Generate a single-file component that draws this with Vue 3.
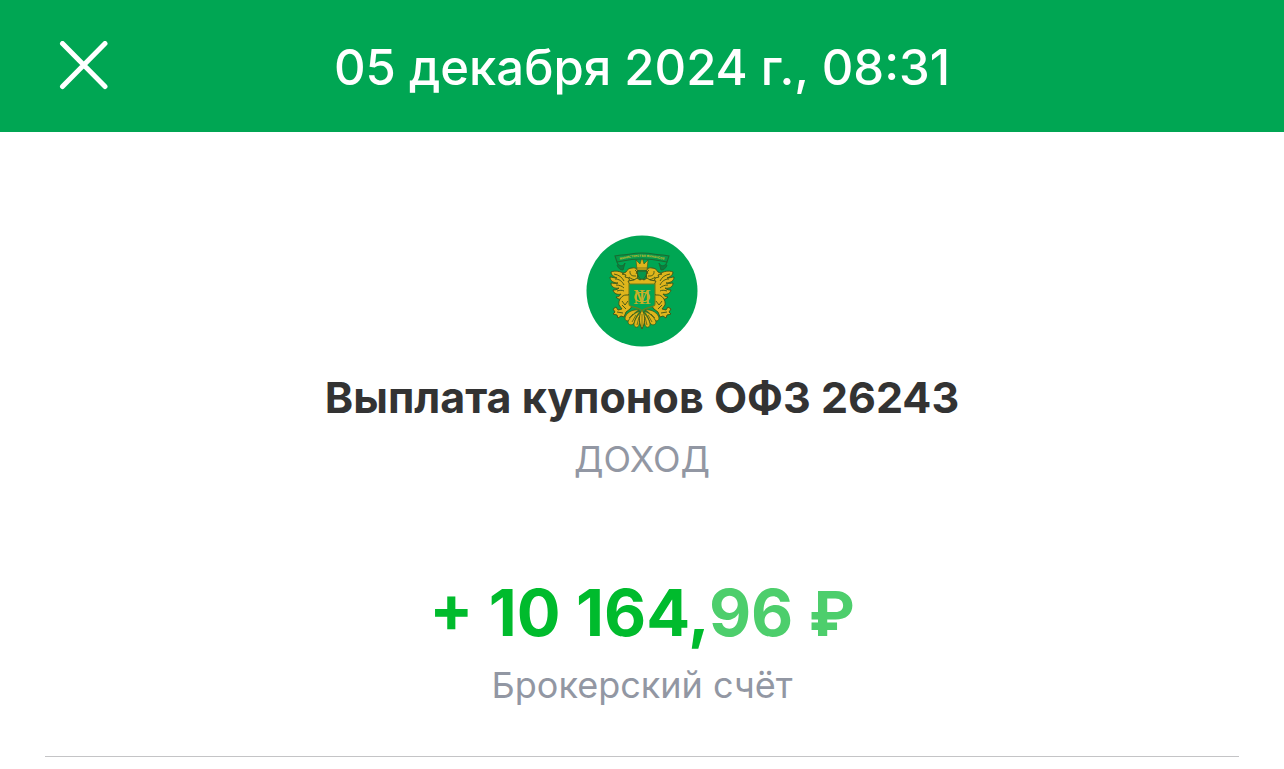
<script setup>
const operation = {
  date: '05 декабря 2024 г., 08:31',
  title: 'Выплата купонов ОФЗ 26243',
  type: 'ДОХОД',
  whole: '+ 10 164,',
  cents: '96',
  currency: '₽',
  account: 'Брокерский счёт',
};
</script>

<template>
  <div class="screen">
    <header class="top-bar">
      <button type="button" class="close-btn" aria-label="Закрыть">
        <svg viewBox="0 0 50 50" width="50" height="50" aria-hidden="true">
          <path d="M3.5 2.5 46 45.5M46 2.5 3.5 45.5" />
        </svg>
      </button>
      <h1 class="date">{{ operation.date }}</h1>
    </header>

    <main class="details">
      <!-- Ministry of Finance emblem -->
      <svg class="emblem" viewBox="0 0 112 112" width="112" height="112" aria-hidden="true">
        <circle cx="56" cy="56" r="55.5" fill="#00a653" />

        <g fill="#dfb51c" stroke="#3c5416" stroke-width="0.9" stroke-linejoin="round">
          <g v-for="side in ['left', 'right']" :key="side" :transform="side === 'right' ? 'translate(112 0) scale(-1 1)' : undefined">
            <!-- wing -->
            <path d="M43 43C38 36 29 35 25 37c0 3 3 5 6 6-3 0-5-1-7-1 0 4 4 6 8 6-3 1-5 0-7 0 0 4 4 6 8 5-2 2-4 2-6 2 1 4 5 5 8 4-1 2-3 3-5 3 2 3 7 3 10 0l4-4V45Z" />
            <path d="M28 39c5 1 8 3 10 7M29 44c4 0 7 2 9 6M30 50c3 0 6 1 8 3M31 56c3-1 5-1 7 0" fill="none" />
            <!-- head -->
            <path d="M54 46c-3-2-3-4-2-7 1-4-2-7-6-6-3 0-5 2-6 4l-4 2 4 1-1 2 4 1c0 3 3 4 6 5h5Z" />
            <path d="M44 38c1 3 3 3 6 3M43 42c2 2 5 3 8 3M49 35c2 1 2 3 1 4" fill="none" />
            <circle cx="44" cy="37" r="0.7" fill="#294e17" stroke="none" />
            <!-- leg and claw -->
            <path d="M40 60c-4 0-8 5-7 10l3 4-4 1-2-3-3 2 2 3-2 2 4 1 1 3 3-2 3 1 2-5 4-3c3-3 3-10 0-14Z" />
            <path d="m36 66 3 4 3-4M36 70l4 4M31 77l6 1" fill="none" />
            <!-- tail feathers -->
            <g stroke-width="0.7">
              <path d="M53 75c-7-1-13 3-14 8 0 3 3 4 5 1 2-4 5-7 9-9Z" />
              <path d="M54 76c-6 2-11 7-12 11 0 3 4 4 6 1 1-4 3-8 6-12Z" />
              <path d="M55 77c-4 4-7 9-7 13 1 3 4 3 5 0Z" />
              <path d="M43 83l4-4M46 87l4-7M51 90l2-8" fill="none" />
            </g>
          </g>
          <path d="M56 75c-3 4-3 10-2 14l2 5 2-5c1-4 1-10-2-14Z" />
          <path d="M56 79v12" fill="none" stroke-width="0.6" />
          <path d="M51 36h10l-1 5-4 5-4-5Z" fill="#07964b" />
          <path d="m50 25 4 4 2-7 2 7 4-4-1 10H51Z" stroke-width="0.6" />
          <path d="M51 33h10" fill="none" stroke-width="0.6" />
          <path d="M42 46l6-1 3-2 3 2 2-1 2 1 3-2 3 2 6 1-2 4H44Z" />
        </g>

        <!-- ribbon -->
        <path d="m31 27-2-6 6-1c7 0 10-2 21-2s14 2 21 2l6 1-2 6c-6-1-12-3-25-3s-19 2-25 3Z" fill="#06994b" stroke="#1a6b31" stroke-width="1.1" />
        <path d="M31 27c2 5 6 5 8 1l-2 7c-3 0-5-2-6-5M81 27c-2 5-6 5-8 1l2 7c3 0 5-2 6-5" fill="#078141" stroke="#1a6b31" />
        <path id="ribbon-line" d="M31 25c9-1 12-3 25-3s16 2 25 3" fill="none" />
        <text class="ribbon-text"><textPath href="#ribbon-line" startOffset="50%" text-anchor="middle">МИНИСТЕРСТВО ФИНАНСОВ</textPath></text>

        <!-- shield with monogram -->
        <path d="M43 49h26v20c0 4-9 2-13 7-4-5-13-3-13-7Z" fill="#00a653" stroke="#6f7d19" stroke-width="1.1" />
        <text class="monogram" x="56" y="69">М</text>
        <text class="monogram wide" x="56" y="69">Ф</text>
      </svg>

      <h2 class="title">{{ operation.title }}</h2>
      <p class="caption">{{ operation.type }}</p>
      <p class="amount">
        {{ operation.whole }}<span class="minor">{{ operation.cents }} <span class="currency">{{ operation.currency }}</span></span>
      </p>
      <p class="caption account">{{ operation.account }}</p>
      <hr class="divider" />
    </main>
  </div>
</template>

<style>
body {
  margin: 0;
  background: #fff;
}
</style>

<style scoped>
.screen {
  font-family: Inter, 'Liberation Sans', sans-serif;
  color: #333;
}

.top-bar {
  display: grid;
  grid-template-columns: 72px 1fr 72px;
  align-items: center;
  min-height: 132px;
  padding: 0 48px;
  box-sizing: border-box;
  background: #00a653;
  color: #fff;
}
.close-btn {
  display: flex;
  align-items: center;
  justify-content: center;
  height: 72px;
  padding: 0;
  border: none;
  background: none;
  cursor: pointer;
}
.close-btn path {
  fill: none;
  stroke: #fff;
  stroke-width: 5;
  stroke-linecap: round;
}
.date {
  margin: 0;
  padding-top: 4px;
  font-size: 49px;
  font-weight: 500;
  line-height: 60px;
  text-align: center;
}

.details {
  display: flex;
  flex-direction: column;
  align-items: center;
  padding: 103px 45px 0;
  text-align: center;
}
.emblem {
  display: block;
}
.ribbon-text {
  fill: #c9bb2c;
  font-size: 3px;
  font-weight: 700;
}
.monogram {
  fill: #c9b026;
  font-family: 'Liberation Serif', serif;
  font-size: 20px;
  text-anchor: middle;
}
.monogram.wide {
  font-size: 22px;
}

.title {
  margin: 24px 0 0;
  font-size: 43px;
  font-weight: 700;
  line-height: 52px;
}
.caption {
  margin: 0;
  font-size: 36px;
  line-height: 44px;
  color: #9297a3;
}
.title + .caption {
  margin-top: 14px;
}
.amount {
  margin: 92px 0 0;
  font-size: 65px;
  font-weight: 700;
  line-height: 80px;
  color: #00bb2d;
}
.minor {
  color: #4dce6c;
}
.currency {
  font-size: 62px;
}
.account {
  margin-top: 9px;
}
.divider {
  align-self: stretch;
  height: 1px;
  margin: 49px 0 0;
  border: none;
  background: #c4c4c6;
}
</style>
